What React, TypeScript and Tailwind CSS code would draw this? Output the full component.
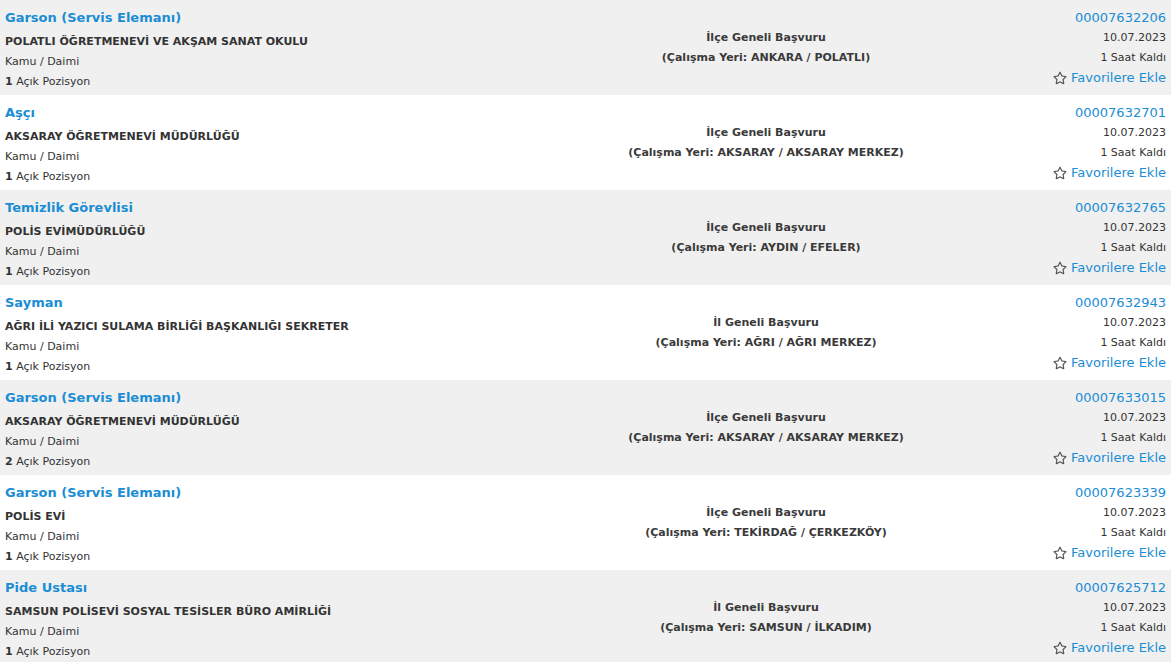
import React from "react";
import { FaRegStar } from "react-icons/fa";

type Job = {
  title: string;
  org: string;
  count: number;
  scope: string;
  place: string;
  id: string;
};

const jobs: Job[] = [
  { title: "Garson (Servis Elemanı)", org: "POLATLI ÖĞRETMENEVİ VE AKŞAM SANAT OKULU", count: 1, scope: "İlçe Geneli Başvuru", place: "ANKARA / POLATLI", id: "00007632206" },
  { title: "Aşçı", org: "AKSARAY ÖĞRETMENEVİ MÜDÜRLÜĞÜ", count: 1, scope: "İlçe Geneli Başvuru", place: "AKSARAY / AKSARAY MERKEZ", id: "00007632701" },
  { title: "Temizlik Görevlisi", org: "POLİS EVİMÜDÜRLÜĞÜ", count: 1, scope: "İlçe Geneli Başvuru", place: "AYDIN / EFELER", id: "00007632765" },
  { title: "Sayman", org: "AĞRI İLİ YAZICI SULAMA BİRLİĞİ BAŞKANLIĞI SEKRETER", count: 1, scope: "İl Geneli Başvuru", place: "AĞRI / AĞRI MERKEZ", id: "00007632943" },
  { title: "Garson (Servis Elemanı)", org: "AKSARAY ÖĞRETMENEVİ MÜDÜRLÜĞÜ", count: 2, scope: "İlçe Geneli Başvuru", place: "AKSARAY / AKSARAY MERKEZ", id: "00007633015" },
  { title: "Garson (Servis Elemanı)", org: "POLİS EVİ", count: 1, scope: "İlçe Geneli Başvuru", place: "TEKİRDAĞ / ÇERKEZKÖY", id: "00007623339" },
  { title: "Pide Ustası", org: "SAMSUN POLİSEVİ SOSYAL TESİSLER BÜRO AMİRLİĞİ", count: 1, scope: "İl Geneli Başvuru", place: "SAMSUN / İLKADIM", id: "00007625712" },
];

export default function App() {
  return (
    <div
      className="w-[1175px] h-[662px] overflow-hidden bg-white text-[#333333]"
      style={{ fontFamily: '"DejaVu Sans", Verdana, sans-serif' }}
    >
      <div className="w-[1171px] flex flex-col">
        {jobs.map((j, i) => (
          <div
            key={i}
            className={`h-[95px] shrink-0 grid grid-cols-[585px_362px_1fr] ${i % 2 === 0 ? "bg-[#f0f0f0]" : "bg-white"}`}
          >
            <div className="pl-[5px] pt-[6px] flex flex-col">
              <div className="text-[13px] leading-[24px] font-bold text-[#1a8dd5]">{j.title}</div>
              <div className="mt-[2px] text-[11px] leading-[20px] font-bold text-[#333333]">{j.org}</div>
              <div className="text-[11px] leading-[20px] text-[#333333]">Kamu / Daimi</div>
              <div className="text-[11px] leading-[20px] text-[#333333]">
                <span className="font-bold">{j.count}</span> Açık Pozisyon
              </div>
            </div>
            <div className="pt-[28px] flex flex-col items-center">
              <div className="text-[11px] leading-[20px] font-bold text-[#3a3a3a]">{j.scope}</div>
              <div className="text-[11px] leading-[20px] font-bold text-[#3a3a3a]">(Çalışma Yeri: {j.place})</div>
            </div>
            <div className="pt-[8px] pr-[5px] flex flex-col items-end">
              <div className="text-[13px] leading-[20px] text-[#1a8dd5]">{j.id}</div>
              <div className="text-[11px] leading-[20px] text-[#333333]">10.07.2023</div>
              <div className="text-[11px] leading-[20px] text-[#333333]">1 Saat Kaldı</div>
              <div className="flex items-center gap-[4px] text-[13px] leading-[20px] text-[#1a8dd5]">
                <FaRegStar className="w-[14px] h-[14px] text-[#555555]" />
                <span>Favorilere Ekle</span>
              </div>
            </div>
          </div>
        ))}
      </div>
    </div>
  );
}
